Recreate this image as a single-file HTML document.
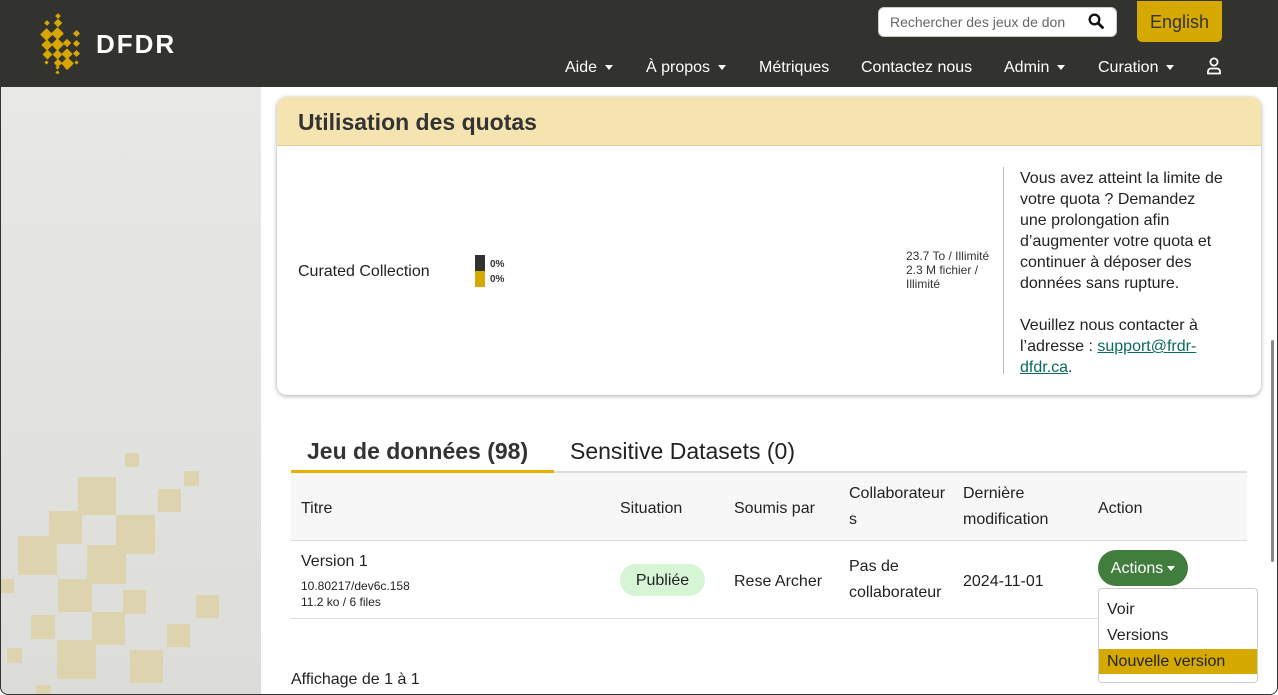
<!DOCTYPE html>
<html><head><meta charset="utf-8"><style>
*{box-sizing:border-box;margin:0;padding:0}
body{width:1278px;height:695px;overflow:hidden;font-family:"Liberation Sans",sans-serif;color:#222;background:#fff;position:relative}
.a{position:absolute}
.hdr{left:0;top:0;width:1278px;height:87px;background:#32322e;border-top:1px solid #555}
.nav{color:#fff;font-size:16px;top:59px}
.car{display:inline-block;border-left:4px solid transparent;border-right:4px solid transparent;border-top:5px solid #fff;vertical-align:middle;margin-left:8px}
.side{left:0;top:87px;width:261px;height:608px;background:linear-gradient(#e8e8e6,#dcdcd9);border-radius:0 0 0 8px}
.sq{position:absolute;background:#ddd3ae}
.t{font-size:16px;color:#222}
</style></head><body>
<div class="a hdr"></div>
<svg class="a" style="left:38px;top:12px" width="45" height="62" viewBox="0 0 45 62">
<g fill="#d8a600">
<rect x="18" y="2" width="4" height="4" transform="rotate(45 20 4)"/>
<rect x="7" y="9" width="4" height="4" transform="rotate(45 9 11)"/>
<rect x="17" y="8" width="6" height="6" transform="rotate(45 20 11)"/>
<rect x="4" y="18" width="9" height="9" transform="rotate(45 8.5 22.5)"/>
<rect x="15" y="17" width="9" height="9" transform="rotate(45 19.5 21.5)"/>
<rect x="36" y="19" width="5" height="5" transform="rotate(45 38.5 21.5)"/>
<rect x="5" y="29" width="8" height="8" transform="rotate(45 9 33)"/>
<rect x="15" y="28" width="9" height="9" transform="rotate(45 19.5 32.5)"/>
<rect x="26" y="28" width="6" height="6" transform="rotate(45 29 31)"/>
<rect x="36" y="29" width="5" height="5" transform="rotate(45 38.5 31.5)"/>
<rect x="6" y="39" width="7" height="7" transform="rotate(45 9.5 42.5)"/>
<rect x="16" y="39" width="7" height="7" transform="rotate(45 19.5 42.5)"/>
<rect x="25" y="38" width="8" height="8" transform="rotate(45 29 42)"/>
<rect x="36" y="39" width="5" height="5" transform="rotate(45 38.5 41.5)"/>
<rect x="7" y="49" width="3" height="3" transform="rotate(45 8.5 50.5)"/>
<rect x="17" y="48" width="6" height="6" transform="rotate(45 20 51)"/>
<rect x="25" y="47" width="9" height="9" transform="rotate(45 29.5 51.5)"/>
<rect x="37" y="49" width="3" height="3" transform="rotate(45 38.5 50.5)"/>
<rect x="18" y="54" width="3" height="3" transform="rotate(45 19.5 55.5)"/>
<rect x="27" y="54" width="3" height="3" transform="rotate(45 28.5 55.5)"/>
<rect x="18" y="59" width="3" height="3" transform="rotate(45 19.5 60.5)"/>
</g></svg>
<div class="a" style="left:96px;top:29px;color:#fff;font-weight:bold;font-size:26px;letter-spacing:2px">DFDR</div>
<div class="a" style="left:878px;top:7px;width:239px;height:30px;background:#fff;border-radius:6px;border:1px solid #ccc"></div>
<div class="a" style="left:890px;top:14px;font-size:14px;color:#666;width:176px;overflow:hidden;white-space:nowrap">Rechercher des jeux de données</div>
<svg class="a" style="left:1088px;top:13px" width="16" height="16" viewBox="0 0 16 16"><circle cx="6.5" cy="6.5" r="4.8" fill="none" stroke="#111" stroke-width="2.3"/><line x1="10" y1="10" x2="14.5" y2="14.5" stroke="#111" stroke-width="2.8" stroke-linecap="round"/></svg>
<div class="a" style="left:1137px;top:1px;width:85px;height:41px;background:#d6a900;border-radius:0 0 5px 5px;font-size:18px;color:#333;text-align:center;line-height:43px">English</div>
<div class="a nav" style="left:565px">Aide<span class="car"></span></div>
<div class="a nav" style="left:646px">À propos<span class="car"></span></div>
<div class="a nav" style="left:759px">Métriques</div>
<div class="a nav" style="left:861px">Contactez nous</div>
<div class="a nav" style="left:1004px">Admin<span class="car"></span></div>
<div class="a nav" style="left:1098px">Curation<span class="car"></span></div>
<svg class="a" style="left:1206px;top:57px" width="16" height="18" viewBox="0 0 16 18"><circle cx="8" cy="5" r="3.6" fill="none" stroke="#fff" stroke-width="1.8"/><path d="M2 16.5v-2a3 3 0 0 1 3-3h6a3 3 0 0 1 3 3v2z" fill="none" stroke="#fff" stroke-width="1.8"/></svg>

<div class="a side">
<div class="sq" style="left:125px;top:366px;width:14px;height:14px"></div>
<div class="sq" style="left:184px;top:384px;width:15px;height:15px"></div>
<div class="sq" style="left:78px;top:390px;width:38px;height:38px"></div>
<div class="sq" style="left:158px;top:402px;width:23px;height:23px"></div>
<div class="sq" style="left:49px;top:424px;width:33px;height:33px"></div>
<div class="sq" style="left:116px;top:428px;width:39px;height:39px"></div>
<div class="sq" style="left:18px;top:449px;width:39px;height:39px"></div>
<div class="sq" style="left:87px;top:458px;width:39px;height:39px"></div>
<div class="sq" style="left:0px;top:492px;width:14px;height:14px"></div>
<div class="sq" style="left:58px;top:492px;width:34px;height:33px"></div>
<div class="sq" style="left:123px;top:503px;width:23px;height:24px"></div>
<div class="sq" style="left:196px;top:508px;width:23px;height:23px"></div>
<div class="sq" style="left:31px;top:528px;width:24px;height:24px"></div>
<div class="sq" style="left:92px;top:525px;width:33px;height:33px"></div>
<div class="sq" style="left:167px;top:537px;width:23px;height:23px"></div>
<div class="sq" style="left:7px;top:561px;width:15px;height:15px"></div>
<div class="sq" style="left:57px;top:553px;width:39px;height:39px"></div>
<div class="sq" style="left:130px;top:563px;width:33px;height:33px"></div>
<div class="sq" style="left:36px;top:598px;width:15px;height:10px"></div>
</div>

<div class="a" style="left:277px;top:97px;width:984px;height:298px;border-radius:10px;box-shadow:0 1px 5px rgba(0,0,0,.35);background:#fff"></div>
<div class="a" style="left:277px;top:97px;width:984px;height:49px;background:#f5e3b0;border-radius:10px 10px 0 0;border-bottom:1px solid #e0cf9c"></div>
<div class="a" style="left:298px;top:109px;font-size:23px;font-weight:bold;color:#333">Utilisation des quotas</div>
<div class="a t" style="left:298px;top:263px">Curated Collection</div>
<div class="a" style="left:475px;top:255px;width:10px;height:16px;background:#32322e"></div>
<div class="a" style="left:475px;top:271px;width:10px;height:16px;background:#d6a900"></div>
<div class="a" style="left:490px;top:257px;font-size:10px;font-weight:bold;line-height:15px;color:#333">0%<br>0%</div>
<div class="a" style="left:906px;top:249px;font-size:12px;line-height:14px;color:#333;width:95px">23.7 To / Illimité<br>2.3 M fichier /<br>Illimité</div>
<div class="a" style="left:1003px;top:167px;width:1px;height:207px;background:#bbb"></div>
<div class="a" style="left:1020px;top:168px;font-size:16px;line-height:21px;color:#222;width:206px">Vous avez atteint la limite de votre quota ? Demandez une prolongation afin d’augmenter votre quota et continuer à déposer des données sans rupture.<br><br>Veuillez nous contacter à l’adresse : <span style="color:#0a6a5f;text-decoration:underline">support@frdr-dfdr.ca</span>.</div>

<div class="a" style="left:307px;top:438px;font-size:23px;font-weight:bold;color:#333">Jeu de données (98)</div>
<div class="a" style="left:570px;top:438px;font-size:23px;color:#222">Sensitive Datasets (0)</div>
<div class="a" style="left:291px;top:471px;width:956px;height:2px;background:#ddd"></div>
<div class="a" style="left:291px;top:470px;width:263px;height:3px;background:#e8b000"></div>
<div class="a" style="left:291px;top:473px;width:956px;height:68px;background:#f7f7f7;border-bottom:1px solid #ddd"></div>
<div class="a t" style="left:301px;top:500px">Titre</div>
<div class="a t" style="left:620px;top:500px">Situation</div>
<div class="a t" style="left:734px;top:500px">Soumis par</div>
<div class="a t" style="left:849px;top:481px;line-height:26px;width:100px;word-break:break-all">Collaborateur<br>s</div>
<div class="a t" style="left:963px;top:481px;line-height:26px">Dernière<br>modification</div>
<div class="a t" style="left:1098px;top:500px">Action</div>
<div class="a t" style="left:301px;top:553px">Version 1</div>
<div class="a" style="left:301px;top:578px;font-size:12px;line-height:16px;color:#222">10.80217/dev6c.158<br>11.2 ko / 6 files</div>
<div class="a" style="left:620px;top:564px;width:85px;height:32px;background:#d5f5d5;border-radius:16px;text-align:center;line-height:33px;font-size:16px;color:#222">Publiée</div>
<div class="a t" style="left:734px;top:573px">Rese Archer</div>
<div class="a t" style="left:849px;top:554px;line-height:26px">Pas de<br>collaborateur</div>
<div class="a t" style="left:963px;top:573px">2024-11-01</div>
<div class="a" style="left:291px;top:618px;width:956px;height:1px;background:#ddd"></div>
<div class="a" style="left:1098px;top:550px;width:90px;height:36px;background:#417d3d;border-radius:18px;color:#fff;font-size:16px;line-height:37px;text-align:center">Actions<span class="car" style="margin-left:4px"></span></div>
<div class="a" style="left:1098px;top:588px;width:160px;height:95px;background:#fff;border:1px solid #ccc;border-radius:4px"></div>
<div class="a t" style="left:1107px;top:601px">Voir</div>
<div class="a t" style="left:1107px;top:627px">Versions</div>
<div class="a" style="left:1099px;top:649px;width:158px;height:25px;background:#d6a900"></div>
<div class="a t" style="left:1107px;top:653px">Nouvelle version</div>
<div class="a t" style="left:291px;top:671px">Affichage de 1 à 1</div>
<div class="a" style="left:1271px;top:340px;width:3px;height:222px;background:#888;border-radius:2px"></div>
<div class="a" style="left:0;top:0;width:1278px;height:695px;border:1px solid #333;border-radius:0 0 8px 8px;pointer-events:none"></div>
</body></html>
